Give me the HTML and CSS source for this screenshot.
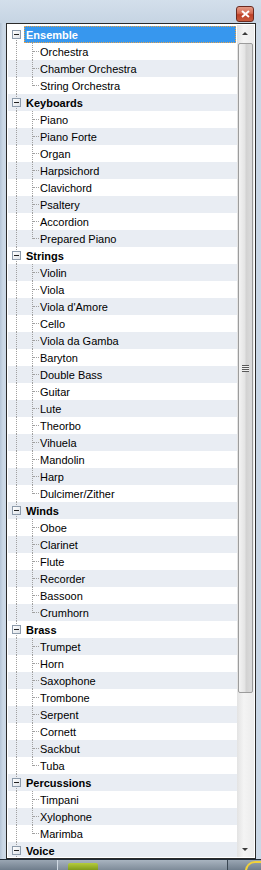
FILE: index.html
```html
<!DOCTYPE html>
<html>
<head>
<link rel="stylesheet" href="styles.css">
</head>
<body>

<div class="window">
  <div class="titlebar">
    <div class="close-button">
      <svg width="9" height="8" viewBox="0 0 9 8"><path d="M1 1 L8 7 M8 1 L1 7" stroke="#fff" stroke-width="2"/></svg>
    </div>
  </div>

  <div class="frame">
    <div class="listbox">
      <div class="tree">
        <div class="row head first selected"><span class="toggle"></span><span class="label">Ensemble</span></div>
        <div class="row leaf"><span class="name">Orchestra</span></div>
        <div class="row leaf"><span class="name">Chamber Orchestra</span></div>
        <div class="row leaf last"><span class="name">String Orchestra</span></div>

        <div class="row head"><span class="toggle"></span><span class="label">Keyboards</span></div>
        <div class="row leaf"><span class="name">Piano</span></div>
        <div class="row leaf"><span class="name">Piano Forte</span></div>
        <div class="row leaf"><span class="name">Organ</span></div>
        <div class="row leaf"><span class="name">Harpsichord</span></div>
        <div class="row leaf"><span class="name">Clavichord</span></div>
        <div class="row leaf"><span class="name">Psaltery</span></div>
        <div class="row leaf"><span class="name">Accordion</span></div>
        <div class="row leaf last"><span class="name">Prepared Piano</span></div>

        <div class="row head"><span class="toggle"></span><span class="label">Strings</span></div>
        <div class="row leaf"><span class="name">Violin</span></div>
        <div class="row leaf"><span class="name">Viola</span></div>
        <div class="row leaf"><span class="name">Viola d'Amore</span></div>
        <div class="row leaf"><span class="name">Cello</span></div>
        <div class="row leaf"><span class="name">Viola da Gamba</span></div>
        <div class="row leaf"><span class="name">Baryton</span></div>
        <div class="row leaf"><span class="name">Double Bass</span></div>
        <div class="row leaf"><span class="name">Guitar</span></div>
        <div class="row leaf"><span class="name">Lute</span></div>
        <div class="row leaf"><span class="name">Theorbo</span></div>
        <div class="row leaf"><span class="name">Vihuela</span></div>
        <div class="row leaf"><span class="name">Mandolin</span></div>
        <div class="row leaf"><span class="name">Harp</span></div>
        <div class="row leaf last"><span class="name">Dulcimer/Zither</span></div>

        <div class="row head"><span class="toggle"></span><span class="label">Winds</span></div>
        <div class="row leaf"><span class="name">Oboe</span></div>
        <div class="row leaf"><span class="name">Clarinet</span></div>
        <div class="row leaf"><span class="name">Flute</span></div>
        <div class="row leaf"><span class="name">Recorder</span></div>
        <div class="row leaf"><span class="name">Bassoon</span></div>
        <div class="row leaf last"><span class="name">Crumhorn</span></div>

        <div class="row head"><span class="toggle"></span><span class="label">Brass</span></div>
        <div class="row leaf"><span class="name">Trumpet</span></div>
        <div class="row leaf"><span class="name">Horn</span></div>
        <div class="row leaf"><span class="name">Saxophone</span></div>
        <div class="row leaf"><span class="name">Trombone</span></div>
        <div class="row leaf"><span class="name">Serpent</span></div>
        <div class="row leaf"><span class="name">Cornett</span></div>
        <div class="row leaf"><span class="name">Sackbut</span></div>
        <div class="row leaf last"><span class="name">Tuba</span></div>

        <div class="row head"><span class="toggle"></span><span class="label">Percussions</span></div>
        <div class="row leaf"><span class="name">Timpani</span></div>
        <div class="row leaf"><span class="name">Xylophone</span></div>
        <div class="row leaf last"><span class="name">Marimba</span></div>

        <div class="row head"><span class="toggle"></span><span class="label">Voice</span></div>
        <div class="row leaf"></div>
      </div>

      <div class="scrollbar">
        <div class="arrow arrow-up"></div>
        <div class="track">
          <div class="thumb"><span class="grip"></span></div>
        </div>
        <div class="arrow arrow-down"></div>
      </div>
    </div>
  </div>

  <div class="taskbar">
    <div class="task-left"></div>
    <div class="task-mid"><span class="task-green"></span></div>
    <div class="task-right"><span class="task-swoosh"></span></div>
  </div>
</div>

</body>
</html>
```

FILE: styles.css
```css
body {
  margin: 0;
  background-color: #c7d5e4;
  font-family: "Liberation Sans", Arial, sans-serif;
  font-size: 11px;
}

.window {
  display: flex;
  flex-direction: column;
  width: 261px;
  height: 870px;
  background: linear-gradient(to right, #b4c4d6 0px, #cbd8e6 3px, #cbd8e6 100%);
}

.titlebar {
  display: flex;
  justify-content: flex-end;
  align-items: flex-start;
  height: 24px;
  padding: 6px 7px 0 0;
  box-sizing: border-box;
  background: linear-gradient(to bottom, #d3dfeb, #c6d4e3);
}

.close-button {
  display: flex;
  align-items: center;
  justify-content: center;
  width: 16px;
  height: 14px;
  border: 1px solid #6b2a20;
  border-radius: 3px;
  background: linear-gradient(to bottom, #e49a86 0%, #d46a52 45%, #bd3f26 55%, #c85a3c 100%);
}

.frame {
  display: flex;
  height: 836px;
  padding: 0 5px 0 6px;
}

.listbox {
  display: flex;
  flex: 1;
  border: 1px solid #2a2a2a;
  padding: 1px;
  background-color: #fff;
  overflow: hidden;
}

.tree {
  flex: 1;
  padding-top: 1px;
  overflow: hidden;
  background-color: #fff;
}

.row {
  position: relative;
  display: flex;
  align-items: center;
  height: 17px;
  white-space: nowrap;
  color: #000;
}

.row:nth-child(odd) {
  background-color: #e9edf3;
}

.row::before {
  content: "";
  position: absolute;
  left: 8px;
  top: 0;
  bottom: 0;
  border-left: 1px dotted #a0a0a0;
}

.head.first::before {
  top: 8px;
}

.toggle {
  position: relative;
  z-index: 1;
  width: 7px;
  height: 7px;
  margin-left: 4px;
  border: 1px solid #8d9bab;
  background: linear-gradient(to bottom right, #ffffff, #dde2e8);
}

.toggle::after {
  content: "";
  position: absolute;
  left: 1px;
  top: 3px;
  width: 5px;
  height: 1px;
  background-color: #202020;
}

.label {
  display: flex;
  align-items: center;
  height: 17px;
  margin-left: 3px;
  padding-left: 2px;
  font-weight: bold;
  box-sizing: border-box;
}

.selected {
  background-color: #fff !important;
}

.selected .label {
  flex: 1;
  margin-right: 1px;
  color: #fff;
  background-color: #3797ee;
  outline: 1px dotted #e8a34a;
  outline-offset: -1px;
}

.leaf::after {
  content: "";
  position: absolute;
  left: 24px;
  top: 0;
  bottom: 0;
  border-left: 1px dotted #a0a0a0;
}

.leaf.last::after {
  bottom: 8px;
}

.name {
  padding-left: 32px;
}

.name::before {
  content: "";
  position: absolute;
  left: 25px;
  top: 8px;
  width: 6px;
  border-top: 1px dotted #a0a0a0;
}

.scrollbar {
  display: flex;
  flex-direction: column;
  width: 17px;
  background: linear-gradient(to right, #e3e3e3, #f4f4f4 40%, #ececec);
}

.arrow {
  position: relative;
  height: 17px;
}

.arrow::after {
  content: "";
  position: absolute;
  left: 5px;
  width: 0;
  height: 0;
  border-left: 3px solid transparent;
  border-right: 3px solid transparent;
}

.arrow-up::after {
  top: 7px;
  border-bottom: 3px solid #3c3c3c;
}

.arrow-down::after {
  top: 8px;
  border-top: 3px solid #3c3c3c;
}

.track {
  flex: 1;
  padding-top: 1px;
}

.thumb {
  display: flex;
  align-items: center;
  justify-content: center;
  height: 648px;
  margin: 0 1px;
  border: 1px solid #9c9c9c;
  border-radius: 2px;
  background: linear-gradient(to right, #f3f3f3, #e4e4e4 45%, #d2d2d2 55%, #dcdcdc);
}

.grip {
  width: 7px;
  height: 7px;
  background: repeating-linear-gradient(to bottom, #5a5a5a 0px, #5a5a5a 1px, #f0f0f0 1px, #f0f0f0 2px);
}

.taskbar {
  display: flex;
  height: 10px;
  border-top: 1px solid #1f2a36;
  background: linear-gradient(to bottom, #9aa6b3, #6f7d8c);
}

.task-left {
  width: 57px;
  border-right: 1px solid #d0dae4;
}

.task-mid {
  display: flex;
  align-items: flex-end;
  width: 159px;
  padding-left: 10px;
  border-right: 1px solid #3a4652;
  background: linear-gradient(to bottom, #a9b4c0, #7e8b99);
}

.task-green {
  width: 30px;
  height: 7px;
  border-radius: 2px 2px 0 0;
  background: linear-gradient(to bottom, #b5cc3c, #7f9a1e);
}

.task-right {
  display: flex;
  justify-content: flex-end;
  flex: 1;
}

.task-swoosh {
  width: 14px;
  height: 8px;
  margin-top: 1px;
  border-top: 2px solid #f2d23a;
  border-left: 2px solid #f2d23a;
  border-radius: 12px 0 0 0;
}
```
